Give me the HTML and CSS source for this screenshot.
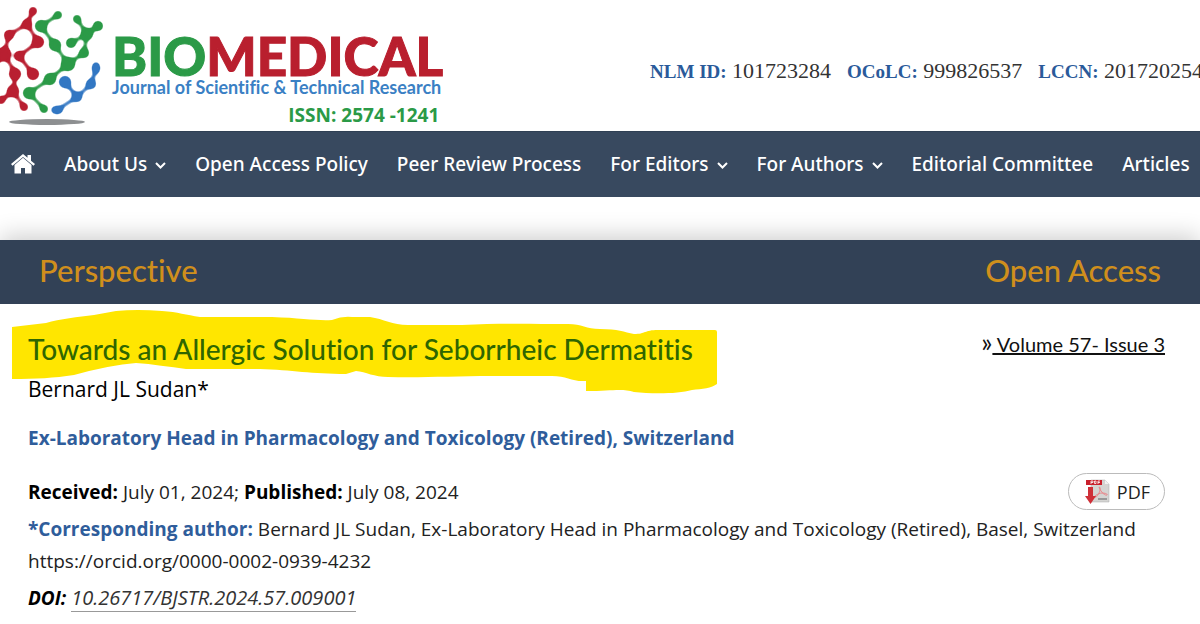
FILE: index.html
```
<!DOCTYPE html>
<html lang="en">
<head>
    <meta charset="UTF-8">
    <meta name="viewport" content="width=device-width, initial-scale=1.0">
    <title>Towards an Allergic Solution for Seborrheic Dermatitis</title>
    <link rel="stylesheet" href="styles.css">
</head>
<body>
    <!-- logo and journal ids -->
    <header class="top-header">
        <a class="brand" href="#">
            <svg class="brand-mark" viewBox="0 0 104 131" aria-hidden="true">
                <defs>
                    <filter id="goo" x="-20%" y="-20%" width="140%" height="140%" color-interpolation-filters="sRGB">
                        <feGaussianBlur stdDeviation="2"/>
                        <feColorMatrix values="1 0 0 0 0  0 1 0 0 0  0 0 1 0 0  0 0 0 5 -1.6"/>
                    </filter>
                </defs>
                <ellipse cx="47" cy="122" rx="38" ry="3" fill="#8d8f91"/>
                <g fill="#b91f31" stroke="#b91f31" filter="url(#goo)">
                    <path fill="none" stroke-width="3" d="M33 11 27 24 9 35 4 54 16 74 13 91 24 107M27 24 38 42 19 56 33 74M13 91 1 101M4 54-6 68"/>
                    <g stroke="none">
                        <circle cx="33" cy="11" r="4"/><circle cx="27" cy="24" r="5"/><circle cx="9" cy="35" r="5"/>
                        <circle cx="4" cy="54" r="7"/><circle cx="38" cy="42" r="6"/><circle cx="19" cy="56" r="5"/>
                        <circle cx="33" cy="74" r="6"/><circle cx="15" cy="74" r="6"/><circle cx="13" cy="91" r="6"/>
                        <circle cx="24" cy="107" r="4"/><circle cx="1" cy="100" r="4"/>
                    </g>
                </g>
                <g fill="#2b9a47" stroke="#2b9a47" filter="url(#goo)">
                    <path fill="none" stroke-width="3" d="M58 15 41 26 55 45 68 64 50 79 29 93 44 109M77 19 87 34 98 26M71 43 87 34 84 53 68 64"/>
                    <g stroke="none">
                        <circle cx="58" cy="15" r="4"/><circle cx="41" cy="26" r="6"/><circle cx="55" cy="45" r="6"/>
                        <circle cx="68" cy="64" r="7"/><circle cx="50" cy="79" r="6"/><circle cx="29" cy="93" r="6"/>
                        <circle cx="44" cy="109" r="4"/><circle cx="77" cy="19" r="4"/><circle cx="87" cy="34" r="6"/>
                        <circle cx="98" cy="26" r="5"/><circle cx="71" cy="43" r="5"/><circle cx="84" cy="53" r="5"/>
                    </g>
                </g>
                <g fill="#3277c3" stroke="#3277c3" filter="url(#goo)">
                    <path fill="none" stroke-width="3" d="M96 69 91 84 77 97 65 82M77 97 57 110"/>
                    <g stroke="none">
                        <ellipse cx="96" cy="68" rx="4" ry="6"/><circle cx="91" cy="84" r="5"/><circle cx="77" cy="97" r="5"/>
                        <circle cx="65" cy="82" r="6"/><ellipse cx="57" cy="110" rx="6" ry="4"/>
                    </g>
                </g>
            </svg>
            <span class="brand-text">
                <span class="brand-name"><span class="green">BIO</span>MEDICAL</span>
                <span class="brand-sub">Journal of Scientific &amp; Technical Research</span>
                <span class="brand-issn">ISSN: 2574 -1241</span>
            </span>
        </a>
        <div class="ids">
            <span><b>NLM ID:</b> 101723284</span>
            <span><b>OCoLC:</b> 999826537</span>
            <span><b>LCCN:</b> 201720254</span>
        </div>
    </header>

    <!-- main menu -->
    <nav class="main-nav">
        <a href="#" aria-label="Home">
            <svg class="home-icon" viewBox="0 0 24 20" aria-hidden="true">
                <path fill="#fff" d="M12 0 0 10l1.500 1.700L12 3l10.500 8.700L24 10l-4-3.300V1h-3.500v2.800z"/>
                <path fill="#fff" d="M12 3.800 3.500 11v8.500H10V14h4v5.500h6.500V11z"/>
            </svg>
        </a>
        <a href="#">About Us <svg class="caret" viewBox="0 0 11 7" aria-hidden="true"><path d="M1 1l4.500 4.500L10 1"/></svg></a>
        <a href="#">Open Access Policy</a>
        <a href="#">Peer Review Process</a>
        <a href="#">For Editors <svg class="caret" viewBox="0 0 11 7" aria-hidden="true"><path d="M1 1l4.500 4.500L10 1"/></svg></a>
        <a href="#">For Authors <svg class="caret" viewBox="0 0 11 7" aria-hidden="true"><path d="M1 1l4.500 4.500L10 1"/></svg></a>
        <a href="#">Editorial Committee</a>
        <a href="#">Articles</a>
    </nav>

    <div class="type-bar">
        <span>Perspective</span>
        <span>Open Access</span>
    </div>

    <!-- article details -->
    <main class="article">
        <div class="title-row">
            <h1 class="title">
                <svg class="marker" viewBox="0 0 706 84" aria-hidden="true">
                    <path d="M0 17 34 13C48 9 66 7 82 5L104 1Q125-1 150 1C166 2 174 5 188 7H260C290 8 305 11 320 10Q330 6 340 7H358C372 9 380 15 396 15H450C490 13 520 14 556 14C570 14 574 19 588 19C606 19 612 22 622 24C634 24 632 20 646 20H703Q705 20 705 22V74C700 78 690 79 680 80C666 84 640 84 622 82C610 78 600 81 574 81V71C560 72 555 66 540 66H480C440 66 410 68 376 67C362 67 354 62 344 61L334 64C300 64 280 60 248 59H174C158 57 140 54 124 53Q98 55 62 65C42 68 24 69 0 69Z"/>
                </svg>
                <span class="title-text">Towards an Allergic Solution for Seborrheic Dermatitis</span>
            </h1>
            <div class="volume"><span class="raquo">»</span><a href="#"> Volume 57- Issue 3</a></div>
        </div>
        <p class="author">Bernard JL Sudan*</p>
        <p class="affiliation">Ex-Laboratory Head in Pharmacology and Toxicology (Retired), Switzerland</p>
        <div class="date-row">
            <p class="dates"><b>Received:</b> July 01, 2024; <b>Published:</b> July 08, 2024</p>
            <a class="pdf-btn" href="#">
                <svg class="pdf-icon" viewBox="0 0 26 26" aria-hidden="true">
                    <path fill="#d5d5d3" stroke="#aaa" stroke-width=".5" d="M6 1h14l4 4v18H6z"/>
                    <path fill="#f2f2f2" d="M20 1v4h4z"/>
                    <path fill="none" stroke="#e9868a" d="M14 8c2 0 1 4 0 6s-3 5-4 4 4-4 7-4 6 1 5 2-6-2-8-8"/>
                    <path fill="#999" d="M13 19h9v2h-9z"/>
                    <path fill="#c9202c" d="M1 1h16v5H1z"/>
                    <path fill="none" stroke="#fff" stroke-width=".8" d="M6 5V2h2v1.500H6M9.500 2v2.500H11V2zM13 5V2h2M13 3.500h2"/>
                    <path fill="#cf3038" d="M3 8h5v9h3l-5.500 8L0 17h3z"/>
                </svg>
                PDF
            </a>
        </div>
        <p class="corresponding"><b class="blue">*Corresponding author:</b> Bernard JL Sudan, Ex-Laboratory Head in Pharmacology and Toxicology (Retired), Basel, Switzerland<br>https://orcid.org/0000-0002-0939-4232</p>
        <p class="doi"><b>DOI:</b> <a href="#">10.26717/BJSTR.2024.57.009001</a></p>
    </main>
</body>
</html>
```
FILE: styles.css
```
* {
    box-sizing: border-box;
}
body {
    margin: 0;
    background-color: #fff;
    color: #222;
    font-family: "Open Sans", sans-serif;
    font-size: 19px;
    font-variant-ligatures: none;
    overflow-x: hidden;
}
p, h1 {
    margin: 0;
}
a {
    color: inherit;
    text-decoration: none;
}

/* header */
.top-header {
    display: flex;
    justify-content: space-between;
    height: 131px;
    white-space: nowrap;
    overflow: hidden;
}
.brand {
    display: flex;
    gap: 8px;
}
.brand-mark {
    width: 104px;
    height: 131px;
}
.brand-text {
    display: flex;
    flex-direction: column;
    padding-top: 35px;
}
.brand-name {
    color: #b91f2e;
    font-family: Lato, sans-serif;
    font-size: 53px;
    font-weight: 900;
    line-height: 42px;
    -webkit-text-stroke: 1px;
}
.green {
    color: #2b9a47;
}
.brand-sub {
    color: #3a80c4;
    font-family: Lato, sans-serif;
    font-size: 18px;
    font-weight: 700;
    line-height: 20px;
}
.brand-issn {
    align-self: flex-end;
    padding-right: 4px;
    color: #2b9a47;
    font-weight: 700;
    line-height: 36px;
}
.ids {
    display: flex;
    flex: none;
    gap: 16px;
    margin-right: -3px;
    padding-top: 58px;
    color: #333;
    font-family: "Liberation Serif", serif;
    font-size: 22px;
}
.ids b {
    color: #2a5a9a;
    font-size: 19px;
}

/* menu */
.main-nav {
    display: flex;
    align-items: center;
    gap: 29px;
    height: 66px;
    padding: 0 0 2px 11px;
    background-color: #38495f;
    border-top: 1px solid #2f4054;
    color: #fff;
    font-family: "Noto Sans", sans-serif;
    font-size: 19px;
    font-weight: 500;
    white-space: nowrap;
    overflow: hidden;
}
.home-icon {
    display: block;
    width: 24px;
    height: 20px;
}
.caret {
    width: 11px;
    height: 7px;
    margin-left: 3px;
    vertical-align: middle;
    fill: none;
    stroke: #fff;
    stroke-width: 2;
}

.type-bar {
    display: flex;
    justify-content: space-between;
    align-items: center;
    height: 64px;
    margin-top: 43px;
    padding: 0 39px 4px;
    background-color: #324156;
    box-shadow: 0 -4px 24px rgba(0, 0, 0, 0.2);
    color: #d08f1c;
    font-family: Lato, sans-serif;
    font-size: 31px;
    font-weight: 500;
}

/* article */
.article {
    padding: 24px 35px 12px 28px;
    background-color: #fff;
    position: relative;
}
.title-row {
    display: flex;
    justify-content: space-between;
}
.title {
    position: relative;
    color: #2f6600;
    font-family: Lato, sans-serif;
    font-size: 28px;
    font-weight: 500;
    line-height: 42px;
    white-space: nowrap;
}
/* yellow marker behind the title */
.marker {
    position: absolute;
    left: -16px;
    top: -18px;
    width: 706px;
    height: 84px;
    fill: #ffe600;
}
.title-text {
    position: relative;
}
.volume {
    color: #111;
    font-family: Lato, sans-serif;
    font-size: 20px;
    line-height: 32px;
}
.volume a {
    text-decoration: underline;
    white-space: pre;
}
.raquo {
    font-size: 26px;
    line-height: 20px;
}
.author {
    position: relative;
    color: #000;
    font-size: 21px;
    font-weight: 500;
    line-height: 38px;
}
.affiliation {
    margin-top: 12px;
    color: #2f5d9b;
    font-weight: 700;
    line-height: 36px;
}
.date-row {
    display: flex;
    justify-content: space-between;
    align-items: center;
    margin-top: 17px;
}
.date-row b, .doi b {
    color: #000;
}
.pdf-btn {
    display: flex;
    align-items: center;
    gap: 6px;
    height: 37px;
    padding: 0 14px 0 16px;
    border: 1px solid #bbb;
    border-radius: 20px;
    font-size: 18px;
}
.pdf-icon {
    width: 26px;
    height: 26px;
}
.corresponding {
    margin-top: 3px;
    line-height: 32px;
}
.blue {
    color: #2f5d9b;
}
.doi {
    margin-top: 8px;
    font-style: italic;
    line-height: 26px;
}
.doi a {
    border-bottom: 1px solid #999;
    color: #333;
    font-size: 20px;
    font-weight: 500;
}
```
